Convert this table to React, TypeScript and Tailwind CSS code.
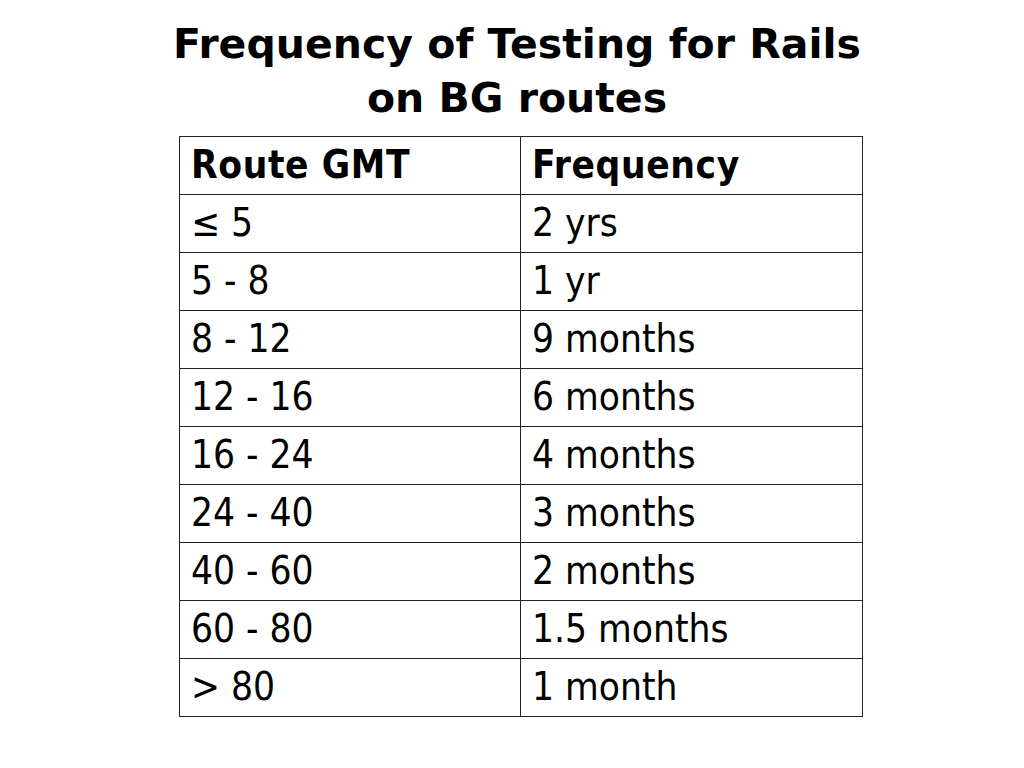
import React from "react";

const rows: [string, string][] = [
  ["≤ 5", "2 yrs"],
  ["5 - 8", "1 yr"],
  ["8 - 12", "9 months"],
  ["12 - 16", "6 months"],
  ["16 - 24", "4 months"],
  ["24 - 40", "3 months"],
  ["40 - 60", "2 months"],
  ["60 - 80", "1.5 months"],
  ["> 80", "1 month"],
];

export default function App() {
  return (
    <div
      className="w-[1024px] h-[768px] bg-white text-black overflow-hidden"
      style={{ fontFamily: '"DejaVu Sans Condensed", "DejaVu Sans", Tahoma, sans-serif' }}
    >
      <div className="pt-[17px] w-[800px] ml-[117px]">
        <h1
          className="text-center font-bold text-[41px] leading-[54px] whitespace-nowrap"
          style={{ fontFamily: '"DejaVu Sans", Tahoma, sans-serif' }}
        >
          Frequency of Testing for Rails
          <br />
          on BG routes
        </h1>
      </div>
      <table className="ml-[179px] mt-[11px] w-[684px] border-collapse text-[38.5px] leading-none">
        <colgroup>
          <col className="w-[341px]" />
          <col />
        </colgroup>
        <tbody>
          <tr className="h-[58px]">
            <td className="border border-[#222] px-[11px] font-bold tracking-[0.6px] align-middle">Route GMT</td>
            <td className="border border-[#222] px-[11px] font-bold tracking-[0.6px] align-middle">Frequency</td>
          </tr>
          {rows.map(([a, b]) => (
            <tr key={a} className="h-[58px]">
              <td className="border border-[#222] px-[11px] align-middle">{a}</td>
              <td className="border border-[#222] px-[11px] align-middle">{b}</td>
            </tr>
          ))}
        </tbody>
      </table>
    </div>
  );
}
